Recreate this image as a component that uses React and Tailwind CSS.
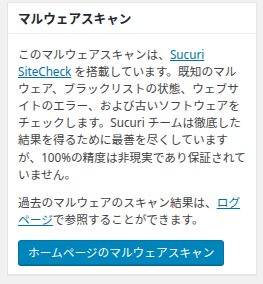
export default function App() {
  return (
    <div
      className="min-h-screen w-full bg-[#f1f1f1] pt-[2px] pl-[7px] pr-[6px] pb-[8px]"
      style={{ fontFamily: '"Noto Sans", "Noto Sans CJK JP", sans-serif' }}
    >
      {/* Malware scan postbox */}
      <div className="border border-[#e5e5e5] bg-white shadow-[0_1px_1px_rgba(0,0,0,0.04)]">
        <div className="flex h-[31px] items-center border-b border-[#eeeeee] px-[10px] pt-[2px]">
          <h2 className="text-[12.6px] font-bold leading-none text-[#23282d]">
            マルウェアスキャン
          </h2>
        </div>

        <div className="px-[10px] pt-[12px] pb-[9px] text-[11.7px] leading-[17.1px] text-[#444444]">
          <p className="mb-[11px]">
            このマルウェアスキャンは、
            <a href="#" className="text-[#0073aa] underline">
              Sucuri SiteCheck
            </a>{" "}
            を搭載しています。既知のマルウェア、ブラックリストの状態、ウェブサイトのエラー、および古いソフトウェアをチェックします。Sucuri
            チームは徹底した結果を得るために最善を尽くしていますが、100%の精度は非現実であり保証されていません。
          </p>
          <p className="mb-[12px]">
            過去のマルウェアのスキャン結果は、
            <a href="#" className="text-[#0073aa] underline">
              ログページ
            </a>
            で参照することができます。
          </p>
          <button className="flex h-[25px] items-center rounded-[3px] border border-[#0073aa] bg-[#0085ba] px-[9px] text-[11.7px] text-white shadow-[0_1px_0_#006799]">
            ホームページのマルウェアスキャン
          </button>
        </div>
      </div>
    </div>
  );
}
